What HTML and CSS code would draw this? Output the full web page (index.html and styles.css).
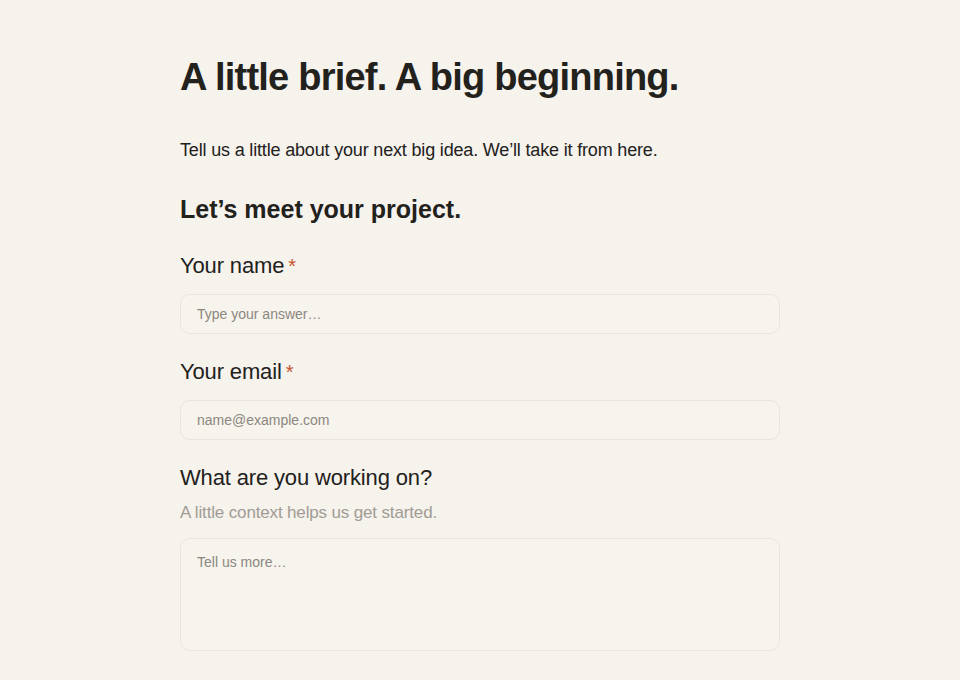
FILE: index.html
```html
<!DOCTYPE html>
<html lang="en">
<head>
<meta charset="utf-8">
<title>A little brief</title>
<link rel="stylesheet" href="styles.css">
</head>
<body>
<main class="page">
  <h1 class="title">A little brief. A big beginning.</h1>
  <p class="lede">Tell us a little about your next big idea. We’ll take it from here.</p>
  <h2 class="section">Let’s meet your project.</h2>
  <form class="form">
    <div class="field">
      <label class="label" for="name">Your name<span class="req">*</span></label>
      <input class="input" id="name" type="text" placeholder="Type your answer…">
    </div>
    <div class="field">
      <label class="label" for="email">Your email<span class="req">*</span></label>
      <input class="input" id="email" type="email" placeholder="name@example.com">
    </div>
    <div class="field">
      <label class="label" for="work">What are you working on?</label>
      <p class="hint">A little context helps us get started.</p>
      <textarea class="input area" id="work" placeholder="Tell us more…"></textarea>
    </div>
  </form>
</main>
</body>
</html>
```

FILE: styles.css
```css
* { box-sizing: border-box; }
html, body { margin: 0; padding: 0; }
body {
  background: #f6f2ec;
  color: #22211c;
  font-family: "Liberation Sans", Arial, sans-serif;
}
.page {
  width: 600px;
  margin: 0 auto;
  padding-top: 53px;
}
.title {
  margin: 0;
  font-size: 38px;
  font-weight: 700;
  line-height: 48px;
  letter-spacing: -0.78px;
}
.lede {
  margin: 36px 0 0;
  font-size: 18px;
  line-height: 26px;
  letter-spacing: -0.17px;
}
.section {
  margin: 30px 0 0;
  font-size: 25px;
  font-weight: 700;
  line-height: 32px;
}
.form { display: flex; flex-direction: column; gap: 23px; margin-top: 26px; }
.field { display: flex; flex-direction: column; }
.label {
  font-size: 22px;
  line-height: 30px;
  color: #22211c;
  margin-bottom: 13px;
  letter-spacing: -0.15px;
}
.req { color: #c4552f; margin-left: 4px; font-size: 20px; vertical-align: top; }
.hint {
  margin: -5px 0 13px;
  font-size: 17px;
  line-height: 24px;
  color: #a19c95;
  letter-spacing: -0.15px;
}
.input {
  width: 600px;
  height: 40px;
  border: 1px solid #ebe5dc;
  border-radius: 10px;
  background: #f7f3ed;
  padding: 0 16px;
  font-family: "Liberation Sans", Arial, sans-serif;
  font-size: 14px;
  color: #22211c;
  outline: none;
}
.input::placeholder { color: #8c877f; }
.area {
  height: 113px;
  padding: 15px 16px;
  resize: none;
  display: block;
}
```
